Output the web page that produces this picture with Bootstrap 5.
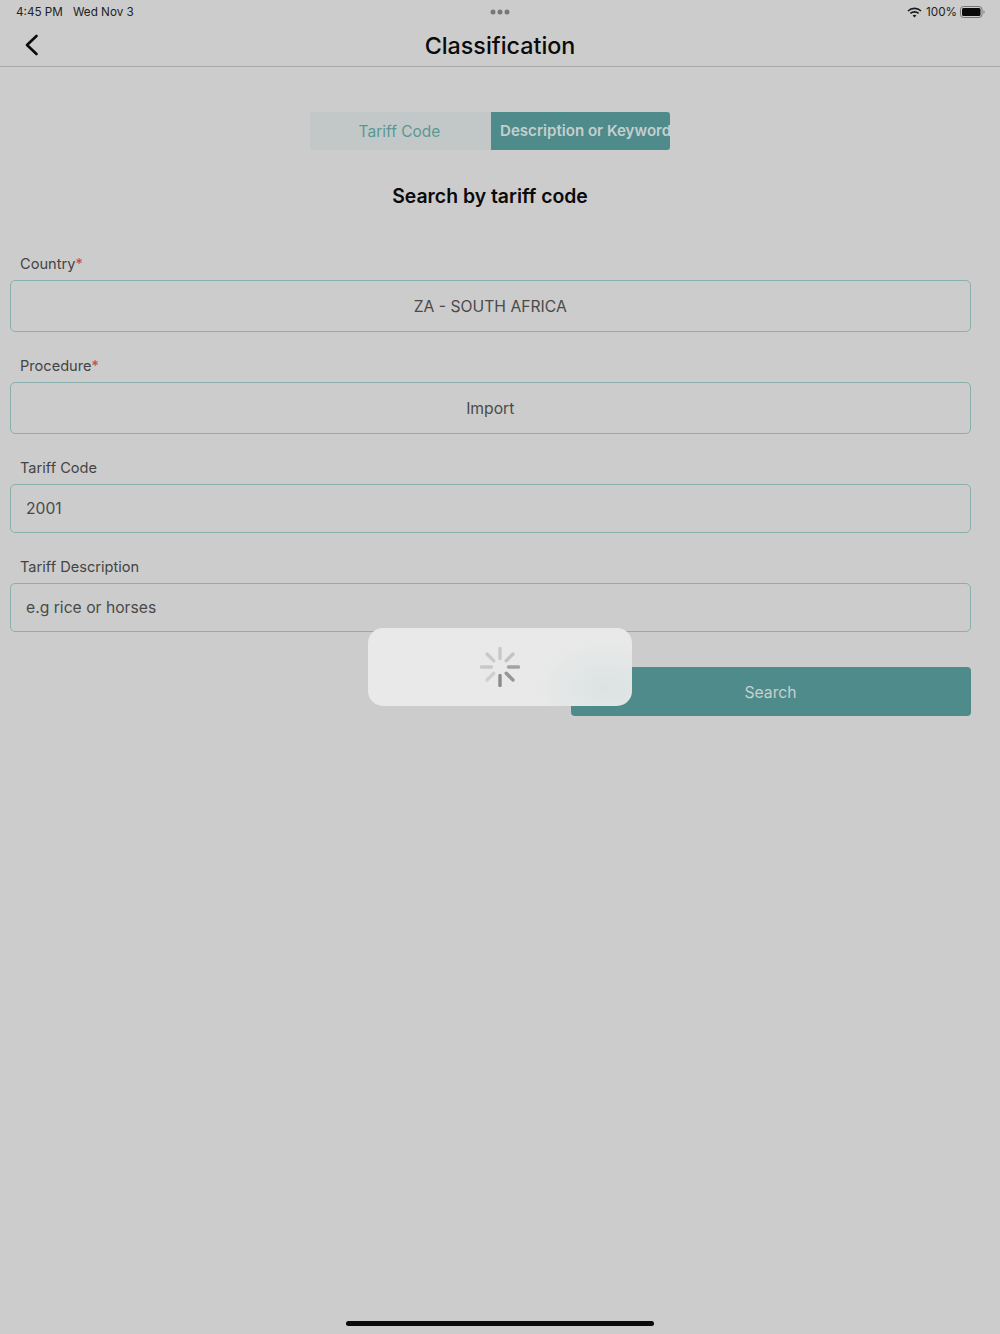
<!DOCTYPE html>
<html lang="en">
<head>
	<meta charset="UTF-8" />
	<meta name="viewport" content="width=device-width, initial-scale=1.0" />
	<title>Classification</title>
	<link href="https://cdn.jsdelivr.net/npm/bootstrap@5.3.3/dist/css/bootstrap.min.css" rel="stylesheet" />
	<script src="https://cdn.jsdelivr.net/npm/bootstrap@5.3.3/dist/js/bootstrap.bundle.min.js"></script>

	<style>
		html, body {
			height: 100%;
		}

		body {
			background-color: #cccccc;
			color: #3f3f3f;
			font-family: Inter, "Liberation Sans", sans-serif;
			position: relative;
			overflow: hidden;
		}

		.app-shell {
			height: 1334px;
		}

		.status-bar {
			height: 24px;
			padding: 1px 15px 0 16px;
			font-size: 11.7px;
			color: #222;
		}

		.status-date {
			margin-left: 10px;
		}

		.status-gap {
			margin-left: 3px;
		}

		.status-dots {
			gap: 2px;
		}

		.status-dots span {
			width: 5px;
			height: 5px;
			border-radius: 50%;
			background-color: #777;
		}

		.title-bar {
			height: 43px;
			padding-top: 2px;
			border-bottom: 1px solid #a8a8a8;
		}

		.title-bar h1 {
			font-size: 23.3px;
			font-weight: 500;
			color: #0a0a0a;
			margin: 0;
		}

		.back-btn {
			position: absolute;
			left: 24px;
			top: 10px;
			line-height: 0;
		}

		.seg-wrap {
			width: 360px;
			height: 38px;
			margin: 45px 0 0 310px;
		}

		.seg-off, .seg-on {
			height: 38px;
			padding-top: 1px;
			white-space: nowrap;
		}

		.seg-off {
			width: 181px;
			padding-right: 2px;
			font-size: 15.5px;
			background-color: #c2c8c8;
			color: #5c9793;
			border-radius: 3px 0 0 3px;
		}

		.seg-on {
			width: 179px;
			font-size: 15.1px;
			background-color: #508b8c;
			color: #c4d0cf;
			font-weight: 600;
			border-radius: 0 3px 3px 0;
			padding-left: 9px;
		}

		.page-heading {
			width: 980px;
			margin: 34px 0 0;
			font-size: 19.4px;
			font-weight: 600;
			line-height: 24px;
			color: #0a0a0a;
		}

		.search-form {
			width: 980.5px;
			padding: 0 10px;
			margin-top: 46px;
		}

		.field-label {
			display: block;
			font-size: 14.6px;
			line-height: 20px;
			padding-left: 10px;
			margin-bottom: 6px;
			color: #444;
		}

		.field-label b {
			font-weight: 400;
			color: #c8474b;
		}

		.field-box.form-control {
			background-color: transparent;
			border: 1px solid #89b0ad;
			border-radius: 5px;
			font-size: 15.7px;
			color: #4a4a4a;
			padding: 0 15px;
		}

		.field-box::placeholder {
			color: #4a4a4a;
			opacity: 1;
		}

		.box-tall.form-control {
			height: 52px;
			text-align: center;
		}

		.box-short.form-control {
			height: 49px;
		}

		.gap-field {
			margin-bottom: 24px;
		}

		.search-btn.btn {
			width: 400px;
			height: 49px;
			margin-top: 35px;
			padding-top: 8px;
			background-color: #508b8c;
			border: 0;
			border-radius: 4px;
			color: #c4d0cf;
			font-size: 15.7px;
		}

		.loader-panel {
			position: absolute;
			left: 368px;
			top: 628px;
			width: 264px;
			height: 78px;
			border-radius: 15px;
			background-color: #e9e9e9;
			background-image: radial-gradient(ellipse 72px 50px at 238px 60px, #dbe3e2 0%, #e9e9e9 100%);
		}

		.home-bar {
			width: 308px;
			height: 5px;
			margin-bottom: 8px;
			border-radius: 3px;
			background-color: #0a0a0a;
		}
	</style>
</head>
<body>

	<div class="app-shell d-flex flex-column">

		<div class="status-bar d-flex align-items-center justify-content-between position-relative flex-shrink-0">
			<div><span>4:45 PM</span><span class="status-date">Wed Nov 3</span></div>
			<div class="status-dots d-flex position-absolute top-50 start-50 translate-middle"><span></span><span></span><span></span></div>
			<div class="d-flex align-items-center">
				<svg width="15" height="11" viewBox="0 0 15 11" class="me-1">
					<path d="M1 4 A9.5 9.5 0 0 1 14 4" fill="none" stroke="#1a1a1a" stroke-width="1.7" />
					<path d="M3.4 6.4 A6 6 0 0 1 11.6 6.4" fill="none" stroke="#1a1a1a" stroke-width="1.7" />
					<path d="M5.6 8.5 A3 3 0 0 1 9.4 8.5 L7.5 10.6 Z" fill="#1a1a1a" />
				</svg>
				<span>100%</span>
				<svg width="25" height="12" viewBox="0 0 25 12" class="status-gap">
					<rect x="0.5" y="0.5" width="21.5" height="11" rx="3" fill="none" stroke="#777" />
					<rect x="2" y="2" width="18.5" height="8" rx="1.5" fill="#0a0a0a" />
					<path d="M23.5 4.2 a2 2 0 0 1 0 3.6 Z" fill="#777" />
				</svg>
			</div>
		</div>

		<div class="title-bar d-flex align-items-center justify-content-center position-relative flex-shrink-0">
			<a class="back-btn" href="#">
				<svg width="15" height="22" viewBox="0 0 15 22">
					<path d="M12.5 2 L3 11 L12.5 20" fill="none" stroke="#0a0a0a" stroke-width="2.6" stroke-linecap="round" stroke-linejoin="round" />
				</svg>
			</a>
			<h1>Classification</h1>
		</div>

		<div class="seg-wrap d-flex flex-shrink-0">
			<div class="seg-off d-flex align-items-center justify-content-center">Tariff Code</div>
			<div class="seg-on d-flex align-items-center">Description or Keyword</div>
		</div>

		<h2 class="page-heading text-center">Search by tariff code</h2>

		<form class="search-form">
			<label class="field-label">Country<b>*</b></label>
			<input class="form-control field-box box-tall gap-field" value="ZA - SOUTH AFRICA" />

			<label class="field-label">Procedure<b>*</b></label>
			<input class="form-control field-box box-tall gap-field" value="Import" />

			<label class="field-label">Tariff Code</label>
			<input class="form-control field-box box-short gap-field" value="2001" />

			<label class="field-label">Tariff Description</label>
			<input class="form-control field-box box-short" placeholder="e.g rice or horses" />

			<div class="d-flex justify-content-end">
				<button type="button" class="btn search-btn">Search</button>
			</div>
		</form>

		<div class="home-bar mt-auto mx-auto flex-shrink-0"></div>
	</div>

	<div class="loader-panel d-flex align-items-center justify-content-center">
		<svg width="40" height="40" viewBox="0 0 40 40" stroke-width="3.4" stroke-linecap="round">
			<line x1="20" y1="1.5" x2="20" y2="11.5" stroke="#c8c8c8" />
			<line x1="33" y1="7" x2="26.2" y2="13.8" stroke="#c4c4c4" />
			<line x1="38.5" y1="20" x2="28.5" y2="20" stroke="#a3a3a3" />
			<line x1="33" y1="33" x2="26.2" y2="26.2" stroke="#969696" />
			<line x1="20" y1="38.5" x2="20" y2="28.5" stroke="#8b8b8b" />
			<line x1="7" y1="33" x2="13.8" y2="26.2" stroke="#cfcfcf" />
			<line x1="1.5" y1="20" x2="11.5" y2="20" stroke="#c8c8c8" />
			<line x1="7" y1="7" x2="13.8" y2="13.8" stroke="#cacaca" />
		</svg>
	</div>

</body>
</html>
